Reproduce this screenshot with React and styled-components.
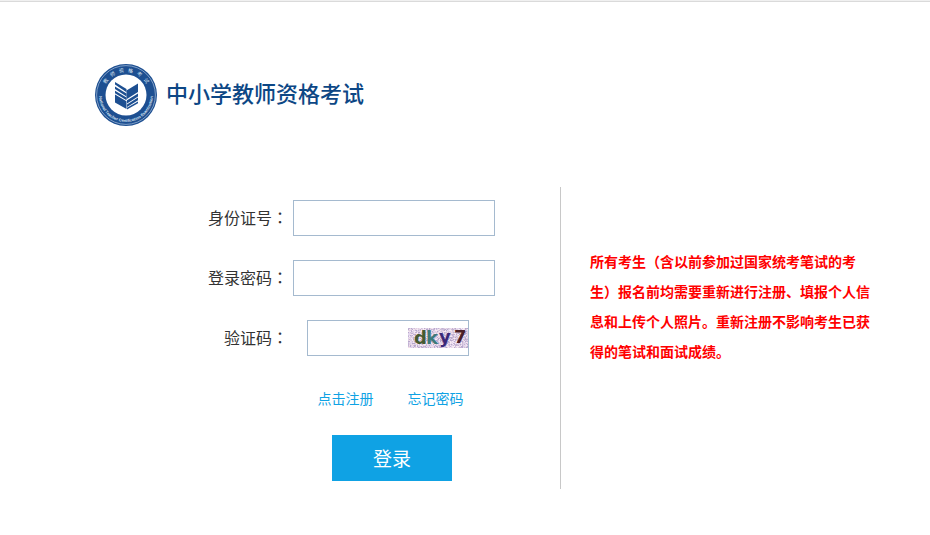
import React from "react";
import styled, { createGlobalStyle } from "styled-components";

const GlobalStyle = createGlobalStyle`
  * {
    box-sizing: border-box;
  }
  body {
    margin: 0;
    background-color: #fff;
    color: #333;
    font-family: "Liberation Sans", "Noto Sans CJK SC", sans-serif;
  }
`;

const TopLine = styled.div`
  height: 2px;
  background-color: #f0f0f0;
  border-bottom: 1px solid #dadada;
`;
const Header = styled.header`
  display: flex;
  align-items: center;
  padding: 61px 94px 0px;
`;
const Logo = styled.svg`
  width: 64px;
  height: 64px;
  flex: none;
`;
const Title = styled.h1`
  margin: 0px 0px 0px 8px;
  color: #0d4785;
  font-size: 22px;
  font-weight: 500;
  line-height: 32px;
`;
const Main = styled.main`
  display: grid;
  grid-template-columns: 56fr 37fr;
  margin-top: 60px;
`;
const Form = styled.form`
  display: flex;
  flex-direction: column;
  align-items: flex-end;
  padding: 13px 65px 8px 0px;
`;
const Row = styled.div`
  display: flex;
  align-items: center;
  width: 287px;
  margin-bottom: 24px;
`;
const Label = styled.label`
  width: 80px;
  margin-right: 5px;
  font-size: 16px;
  line-height: 24px;
  text-align: right;
  white-space: nowrap;
`;
const Colon = styled.span`
  font-family: "Noto Sans CJK TC", sans-serif;
`;
const Input = styled.input`
  flex: 1;
  min-width: 0;
  height: 36px;
  padding: 0px 8px;
  border: 1px solid #a5bacf;
  border-radius: 0;
  background-color: #fff;
  font-size: 16px;
  outline: none;
`;
const CodeBox = styled.div`
  display: flex;
  align-items: center;
  width: 162px;
  height: 36px;
  margin-left: 14px;
  border: 1px solid #a5bacf;
`;
const CodeInput = styled(Input)`
  height: 34px;
  border: none;
`;
const CodeImage = styled.svg`
  width: 60px;
  height: 20px;
  flex: none;
  overflow: visible;
`;
const Actions = styled.div`
  display: flex;
  flex-direction: column;
  align-items: center;
  width: 206px;
`;
const Links = styled.div`
  display: flex;
  gap: 34px;
  margin: 8px 0px 25px;
  padding-right: 3px;
`;
const Link = styled.a`
  color: #0fa2e4;
  font-size: 14px;
  line-height: 22px;
  text-decoration: none;
`;
const Button = styled.button`
  width: 120px;
  height: 46px;
  padding: 0px 0px 2px;
  border: none;
  background-color: #0fa2e4;
  color: #fff;
  font-family: inherit;
  font-size: 19px;
  cursor: pointer;
`;
const Notice = styled.aside`
  padding: 60px 56px 60px 29px;
  border-left: 1px solid #c8c8c8;
`;
const NoticeText = styled.p`
  margin: 0;
  color: #f00;
  font-size: 14px;
  font-weight: 700;
  line-height: 30px;
`;

const noiseColors = ["#c3b2d4", "#f6eaf5", "#cdbfda", "#f2dfe9", "#b7a8cc", "#e3d7ef"];

// scattered pixels behind the check code
const noise = [];
let seed = 17;
for (let y = 0; y < 20; y++) {
  for (let x = 0; x < 60; x++) {
    seed = (seed * 16807) % 2147483647;
    if (seed % 100 < 72) {
      noise.push({ x, y, fill: noiseColors[(seed >> 8) % 6] });
    }
  }
}

const CheckCode = () => (
  <CodeImage viewBox="0 0 60 20" role="img" aria-label="验证码图片">
    <rect width="60" height="20" fill="#ded0e4" />
    <g shapeRendering="crispEdges">
      {noise.map((dot) => (
        <rect key={`${dot.x}-${dot.y}`} x={dot.x} y={dot.y} width="1" height="1" fill={dot.fill} />
      ))}
    </g>
    <g fontFamily="DejaVu Sans" fontWeight="700" fontSize="18">
      <text x="6" y="16" fill="#455a32">d</text>
      <text x="18" y="16" fill="#3c7a7a">k</text>
      <text x="31" y="15" fill="#3a2878">y</text>
      <text x="46" y="15" fill="#4a2028">7</text>
    </g>
  </CodeImage>
);

const Emblem = () => (
  <Logo viewBox="0 0 64 64" aria-hidden="true">
    <defs>
      <path id="arcTop" d="M9 32a23 23 0 0 1 46 0" />
      <path id="arcBottom" d="M5 32a27 27 0 0 0 54 0" />
    </defs>
    <circle cx="32" cy="32" r="31" fill="#1d4f91" />
    <circle cx="32" cy="32" r="29.4" fill="none" stroke="#a9c0dc" strokeWidth="0.7" />
    <circle cx="32" cy="32" r="20.5" fill="#fff" />
    <g fill="#dbe6f2" textAnchor="middle">
      <text fontSize="5" fontFamily="Noto Sans CJK SC">
        <textPath href="#arcTop" startOffset="50%">{"教师资格考试".split("").join("\u2002\u2005")}</textPath>
      </text>
      <text fontSize="4" fontWeight="700" fontFamily="Liberation Sans">
        <textPath href="#arcBottom" startOffset="50%">National Teacher Certification Examination</textPath>
      </text>
    </g>
    <g fill="#1d4f91">
      <path d="M21 19l11.5 7v3.2L21 21.6z" />
      <path d="M21 23.4l11.5 7v3L21 26z" />
      <path d="M21 27.8l11.5 6.8v2.6L21 30.2z" />
      <path d="M21 31.4l11.5 6.8V46L21 39.4z" />
      <path d="M44 20.4l-11.5 7v8.8l11.5-7.2z" />
      <path d="M44 30.4l-11 6.8v3.2l11-7z" />
      <path d="M44 34.6l-11 6.8v2.6l11-6.8z" />
      <path d="M44 38.4l-11 6.4v1.8l11-6.4z" />
    </g>
  </Logo>
);

const App = () => {
  return (
    <>
      <GlobalStyle />
      <TopLine />
      <Header>
        <Emblem />
        <Title>中小学教师资格考试</Title>
      </Header>
      <Main>
        <Form onSubmit={(e) => e.preventDefault()}>
          <Row>
            <Label htmlFor="idNumber">
              身份证号<Colon>：</Colon>
            </Label>
            <Input id="idNumber" type="text" />
          </Row>
          <Row>
            <Label htmlFor="password">
              登录密码<Colon>：</Colon>
            </Label>
            <Input id="password" type="password" />
          </Row>
          <Row>
            <Label htmlFor="code">
              验证码<Colon>：</Colon>
            </Label>
            <CodeBox>
              <CodeInput id="code" type="text" />
              <CheckCode />
            </CodeBox>
          </Row>
          <Actions>
            <Links>
              <Link href="#register">点击注册</Link>
              <Link href="#forgot">忘记密码</Link>
            </Links>
            <Button type="submit">登录</Button>
          </Actions>
        </Form>
        <Notice>
          <NoticeText>
            所有考生（含以前参加过国家统考笔试的考生）报名前均需要重新进行注册、填报个人信息和上传个人照片。重新注册不影响考生已获得的笔试和面试成绩。
          </NoticeText>
        </Notice>
      </Main>
    </>
  );
};

export default App;
